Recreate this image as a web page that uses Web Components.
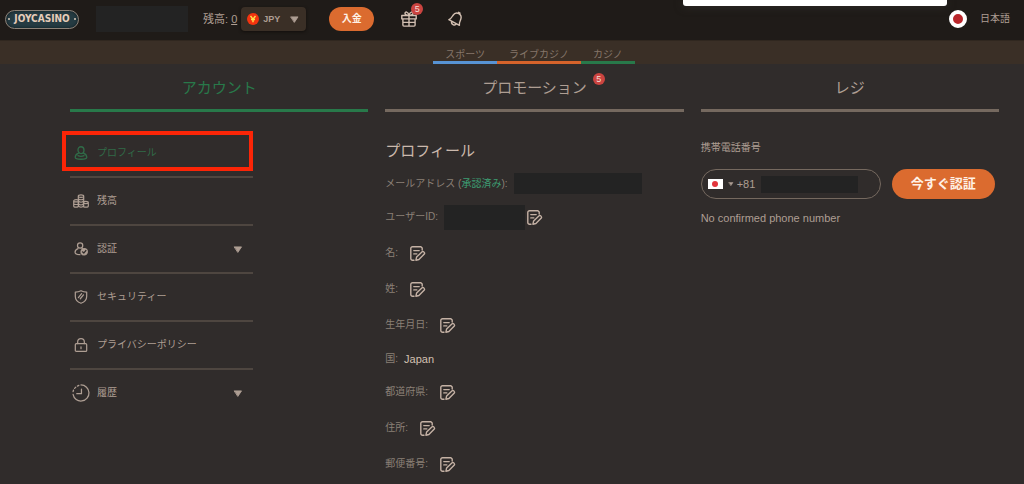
<!DOCTYPE html>
<html lang="ja">
<head>
<meta charset="utf-8">
<meta name="viewport" content="width=device-width, initial-scale=1">
<title>プロフィール</title>
<style>
  :root {
    --bg: #302c2b;
    --bar: #1f1b18;
    --subbar: #3a2f26;
    --text: #ae9e93;
    --dim: #8b8077;
    --bright: #d3c0b2;
    --line: #75695f;
    --green: #28794a;
    --orange: #db6b2f;
    --badge: #cb4440;
    --mask: #232323;
  }
  body {
    margin: 0;
    min-height: 100vh;
    background: var(--bg);
    color: var(--text);
    font: 10px/16px "Liberation Sans", "Noto Sans CJK JP", sans-serif;
  }
</style>
</head>
<body>
<joy-app></joy-app>

<script>
const ICONS = {
  gift: ['0 0 16 16', '<path d="M.8 4.500h14.400v3.400H.8zM1.900 7.900v6.200a1 1 0 0 0 1 1h10.200a1 1 0 0 0 1-1V7.900M8 4.600v10.400M2 11.400h12M8 4.200C6.800 4.200 4 3.900 4 2.200S7 .4 8 4.200C9 .4 12 .5 12 2.200S9.200 4.200 8 4.200"/>'],
  bell: ['0 0 16 16', '<g transform="rotate(28 8 8)"><path d="M2 12c1.400-1.300 1.400-2.700 1.600-5.600C3.900 3.800 5.600 2 8 2S12.100 3.800 12.400 6.400c.2 2.900.2 4.300 1.600 5.600zM7.200 1.900V.9h1.600v1M5.400 12.200c.3 2.800 4.900 2.800 5.200 0"/></g>'],
  user: ['0 0 14 15', '<path d="M7 .8C9 .8 10.200 2.200 10.200 4.200S8.900 8.100 7 8.100S3.800 6.200 3.800 4.200S5 .8 7 .8zM4.400 7.600C2.300 8.400.9 10 .8 12c0 1.500 2.600 2.200 6.200 2.200s6.200-.7 6.200-2.200c-.1-2-1.500-3.600-3.600-4.400M3.800 10.300c2 .9 4.400.9 6.400 0"/>'],
  coins: ['0 0 16 14', '<path d="M5.300 12.200V2.200C5.300.4 10.700.4 10.700 2.200v10M5.300 2.300c0 1.500 5.400 1.500 5.400 0M5.500 5c1 1 4 1 5 0M6 7.600c1 .6 3 .6 4 0M.7 6.900v5c0 1.700 4.900 1.700 4.900 0v-5C5.600 5.200.7 5.200.7 6.900c0 1.400 4.900 1.400 4.900 0M.7 9.500c0 1.300 4.900 1.300 4.900 0M10.400 8.600v3.300c0 1.700 4.900 1.700 4.900 0V8.600c0-1.700-4.900-1.700-4.900 0c0 1.400 4.900 1.400 4.900 0M6 12.600c1 .6 3 .6 4 0M6 10.200c1 .6 3 .6 4 0"/>'],
  verify: ['0 0 16 16', '<circle cx="7" cy="4" r="3"/><path d="M4.600 7.600C2.600 8.300 1.200 9.800 1.200 11.700c0 1.700 1.900 2.700 5.600 2.800M9.200 7.500l1 .5"/><circle cx="11.600" cy="11.200" r="3.600" fill="currentColor"/><path d="M9.700 11.200l1.500 1.400 2.400-2.900" stroke="#302c2b"/>'],
  shield: ['0 0 16 16', '<path d="M8 .8c2 1 4 1.500 6.500 1.500v5c0 3.800-2.600 6.300-6.500 7.900-3.900-1.600-6.500-4.100-6.500-7.900v-5C4 2.300 6 1.800 8 .8z"/><path d="M5 8.700l3.700-4.500M7.200 10l3.600-4.500"/>'],
  lock: ['0 0 16 16', '<rect x="1.500" y="6.400" width="13" height="9" rx="1.200"/><path d="M4.200 6.300V4.400a3.800 3.800 0 0 1 7.600 0v1.900M8 10v2.200"/>'],
  clock: ['0 0 20 20', '<path d="M10 1.100A8.900 8.900 0 1 1 1.200 11.500M1.200 8.500l.5-1.800M2.900 4.900l1.300-1.400M6 2.300l1.600-.8M10.500 5.700v5H5.300"/>'],
  edit: ['0 0 15 15', '<path d="M4 14.200H2.500A1.700 1.700 0 0 1 .8 12.500V2.400A1.700 1.700 0 0 1 2.500.7h8.400l1.300 1.300v2M3.800 4.600h5.400M3.800 7.900h3M5.900 14.200l.7-3.100 5.500-5.300c1.200-.9 3.200 1 2.200 2.300l-5.400 5.400z"/>'],
  caret: ['0 0 10 8', '<path d="M1 1h8L5 7z" fill="currentColor"/>']
};

function define(name, styles, markup) {
  const template = document.createElement('template');
  customElements.define(name, class extends HTMLElement {
    connectedCallback() {
      if (this.shadowRoot) return;
      template.innerHTML = `<style>*{box-sizing:border-box}${styles}</style>` +
        (typeof markup === 'function' ? markup(this) : markup);
      this.attachShadow({ mode: 'open' }).append(template.content.cloneNode(true));
    }
  });
}

define('joy-icon', `
  :host { display: inline-flex; width: 16px; height: 16px; flex: none; }
  svg { width: 100%; height: 100%; fill: none; stroke: currentColor; stroke-width: 1.4;
        stroke-linejoin: round; stroke-linecap: round; overflow: visible; }
  :host([name=coins]) svg { stroke-width: 1.2; }
  :host([name=caret]) svg { stroke-width: 1; }`,
  el => { const [box, body] = ICONS[el.getAttribute('name')];
    return `<svg viewBox="${box}" aria-hidden="true">${body}</svg>`; });

define('count-badge', `
  :host { display: inline-block; width: 12px; height: 12px; border-radius: 50%;
          background: var(--badge); color: #f3ddd5; font-size: 9px; line-height: 12px; text-align: center; }`,
  '<slot></slot>');

define('masked-value', `
  :host { display: inline-block; background: var(--mask); flex: none; }`, '');

define('joy-logo', `
  :host { display: block; width: 74px; height: 19px; flex: none; }
  a { display: flex; align-items: center; justify-content: space-between; height: 100%; padding: 0 2px;
      border: 1px solid #8c8177; border-radius: 10px; background: #253b42;
      box-shadow: inset 0 0 3px #0e1a1e; text-decoration: none; }
  a::before, a::after { content: ""; width: 2px; height: 2px; border-radius: 50%; background: #d8c8b8; }
  span { font: bold 10px/16px "DejaVu Sans Condensed", "Liberation Sans", sans-serif; color: #e6cdb9; }`,
  '<a href="#home"><span>JOYCASINO</span></a>');

define('joy-header', `
  :host { display: flex; align-items: center; height: 41px; padding: 0 14px 2px 5px;
          background: var(--bar); border-bottom: 1px solid #30271f; }
  .user { width: 92px; height: 26px; margin-left: 17px; }
  .balance { margin: 0 4px 0 15px; white-space: nowrap; font-size: 11px; }
  .balance a { color: inherit; }
  .currency { display: flex; align-items: center; width: 65px; height: 24px; padding: 0 7px 0 6px;
              border-radius: 4px; background: var(--subbar); box-shadow: 0 1px 3px #120f0d; }
  .coin { width: 12px; height: 12px; flex: none; margin-right: 4px; }
  select { appearance: none; flex: 1; min-width: 0; padding: 0; border: 0; background: none;
           color: var(--text); font: bold 9px/16px "Liberation Sans", sans-serif; }
  .currency joy-icon { width: 9px; height: 7px; color: var(--text); }
  button { font: inherit; color: inherit; background: none; border: 0; padding: 0; }
  .deposit { width: 45px; height: 24px; margin-left: 23px; border-radius: 12px;
             background: var(--orange); color: #fff1e6; font-weight: bold; }
  .icon { position: relative; display: flex; color: var(--bright); }
  .gift { margin-left: 27px; }
  .bell { margin-left: 31px; }
  count-badge { position: absolute; left: 10px; top: -8px; }
  .lang { display: flex; align-items: center; gap: 13px; margin-left: auto; }
  .flag { width: 18px; height: 18px; border-radius: 50%; border: 4px solid #fff; background: #b9262b; }`,
  `<joy-logo></joy-logo>
   <masked-value class="user"></masked-value>
   <span class="balance">残高: <a href="#balance">0</a></span>
   <label class="currency">
     <svg class="coin" viewBox="0 0 12 12" aria-hidden="true"><circle cx="6" cy="6" r="6" fill="#f4330f"/>
       <path d="M3.500 3l2.500 3.200L8.500 3M6 6v3.200M4 6.500h4" fill="none" stroke="#ffe04a" stroke-width="1.400"/></svg>
     <select aria-label="通貨"><option>JPY</option></select>
     <joy-icon name="caret"></joy-icon>
   </label>
   <button class="deposit">入金</button>
   <button class="icon gift" aria-label="ギフト"><joy-icon name="gift"></joy-icon><count-badge>5</count-badge></button>
   <button class="icon bell" aria-label="通知"><joy-icon name="bell"></joy-icon></button>
   <button class="lang"><span class="flag"></span>日本語</button>`);

define('product-nav', `
  :host { display: flex; justify-content: center; align-items: flex-end; height: 23px;
          padding-left: 44px; background: var(--subbar); }
  a { display: block; height: 18px; padding: 0 12px; color: #85766a; text-decoration: none;
      border-bottom: 3px solid var(--tone); line-height: 17px; }`,
  `<a href="#sports" style="--tone:#5793d4">スポーツ</a>
   <a href="#live" style="--tone:#d5632b">ライブカジノ</a>
   <a href="#casino" style="--tone:#28794a">カジノ</a>`);

define('section-tab', `
  :host { display: block; }
  a { display: flex; justify-content: center; align-items: center; height: 48px; padding-top: 2px;
      border-bottom: 3px solid var(--line); color: var(--text); text-decoration: none; font-size: 15px; line-height: 24px; }
  :host([active]) a { color: var(--green); border-color: var(--green); }
  span { position: relative; }
  ::slotted(count-badge) { position: absolute; left: calc(100% + 6px); top: -3px; }`,
  `<a href="#"><span><slot></slot><slot name="badge"></slot></span></a>`);

define('menu-item', `
  :host { display: block; position: relative; border-bottom: 2px solid #4e4640; }
  :host(:last-child) { border-bottom: 0; }
  a { display: flex; align-items: center; gap: 5px; height: 46px; padding-right: 10px;
      color: var(--text); text-decoration: none; }
  :host([active]) a { color: #306b48; }
  .icon { display: flex; justify-content: center; width: 22px; flex: none; }
  .icon joy-icon { width: 14px; height: 14px; }
  .icon [name=clock] { width: 18px; height: 18px; }
  .icon [name=coins] { width: 16px; height: 14px; }
  .caret { width: 10px; height: 7px; margin-left: auto; }
  :host([active])::after { content: ""; position: absolute; inset: 1px 0 5px -8px; border: 4px solid #fb2507; }`,
  el => `<a href="#"><span class="icon"><joy-icon name="${el.getAttribute('icon')}"></joy-icon></span><slot></slot>
    ${el.hasAttribute('expandable') ? '<joy-icon class="caret" name="caret"></joy-icon>' : ''}</a>`);

define('side-menu', `
  :host { display: block; max-width: 183px; padding-top: 18px; }`,
  `<nav>
   <menu-item icon="user" active>プロフィール</menu-item>
   <menu-item icon="coins">残高</menu-item>
   <menu-item icon="verify" expandable>認証</menu-item>
   <menu-item icon="shield">セキュリティー</menu-item>
   <menu-item icon="lock">プライバシーポリシー</menu-item>
   <menu-item icon="clock" expandable>履歴</menu-item></nav>`);

define('profile-field', `
  :host { display: flex; align-items: center; height: 36px; color: var(--dim); }
  :host([plain]) { height: 31px; }
  .value { display: flex; align-items: center; margin-left: 6px; color: var(--bright); }
  button { display: flex; margin: 0; padding: 0; border: 0; background: none; color: #c5b2a5; }
  :host(:not([filled])) button { margin-left: 6px; }
  :host([filled]) button { margin-left: 2px; }
  joy-icon { width: 15px; height: 15px; }`,
  el => `<span><slot name="label"></slot></span><span class="value"><slot></slot></span>
    ${el.hasAttribute('plain') ? '' : '<button aria-label="編集"><joy-icon name="edit"></joy-icon></button>'}`);

define('profile-panel', `
  :host { display: block; padding-top: 22px; }
  h1 { margin: 0; height: 34px; font-size: 15px; line-height: 34px; font-weight: 400; color: #cbb9ad; }
  .ok { color: #3d9c72; }
  .mail { width: 128px; height: 21px; }
  .id { width: 81px; height: 25px; }
  .country { font-size: 11px; }`,
  `<h1>プロフィール</h1>
   <profile-field plain><span slot="label">メールアドレス (<span class="ok">承認済み</span>):</span><masked-value class="mail"></masked-value></profile-field>
   <profile-field filled><span slot="label">ユーザーID:</span><masked-value class="id"></masked-value></profile-field>
   <profile-field><span slot="label">名:</span></profile-field>
   <profile-field><span slot="label">姓:</span></profile-field>
   <profile-field><span slot="label">生年月日:</span></profile-field>
   <profile-field plain><span slot="label">国:</span><span class="country">Japan</span></profile-field>
   <profile-field><span slot="label">都道府県:</span></profile-field>
   <profile-field><span slot="label">住所:</span></profile-field>
   <profile-field><span slot="label">郵便番号:</span></profile-field>`);

define('phone-panel', `
  :host { display: block; padding-top: 28px; }
  label { display: block; }
  form { display: flex; gap: 11px; margin: 13px 0 11px; }
  .field { display: flex; align-items: center; width: 180px; height: 30px; padding: 0 6px;
           border: 1px solid var(--line); border-radius: 15px; }
  button { font: inherit; border: 0; padding: 0; background: none; color: inherit; }
  .country { display: flex; align-items: center; gap: 5px; }
  .flag { display: flex; align-items: center; justify-content: center; width: 15px; height: 10px; background: #fff; }
  .flag::after { content: ""; width: 6px; height: 6px; border-radius: 50%; background: #e3353c; }
  .country joy-icon { width: 6px; height: 4px; }
  input { width: 21px; margin: 0 3px; padding: 0; border: 0; background: none; color: var(--text);
          font: 11px/16px "Liberation Sans", sans-serif; }
  masked-value { width: 97px; height: 17px; }
  .verify { width: 103px; border-radius: 15px; background: var(--orange); color: #fff1e6; font-size: 13px; font-weight: bold; }
  p { margin: 0; font-size: 11px; }`,
  `<label for="phone">携帯電話番号</label>
   <form>
     <div class="field"><button type="button" class="country" aria-label="国番号"><span class="flag"></span><joy-icon name="caret"></joy-icon></button>
       <input id="phone" type="tel" value="+81"><masked-value></masked-value></div>
     <button type="button" class="verify">今すぐ認証</button>
   </form>
   <p>No confirmed phone number</p>`);

define('joy-app', `
  :host { display: block; }
  .grid { display: grid; grid-template-columns: repeat(3, minmax(0, 1fr)); column-gap: 17px; padding: 0 25px 0 70px; }
  .panel { position: absolute; top: 0; right: 77px; width: 264px; height: 6px;
           background: #fff; border-radius: 0 0 3px 3px; box-shadow: 0 1px 8px #2f2b28; }`,
  `<joy-header></joy-header>
   <product-nav></product-nav>
   <nav class="grid">
     <section-tab active>アカウント</section-tab>
     <section-tab>プロモーション<count-badge slot="badge">5</count-badge></section-tab>
     <section-tab>レジ</section-tab>
   </nav>
   <main class="grid"><side-menu></side-menu><profile-panel></profile-panel><phone-panel></phone-panel></main>
   <div class="panel"></div>`);
</script>
</body>
</html>
